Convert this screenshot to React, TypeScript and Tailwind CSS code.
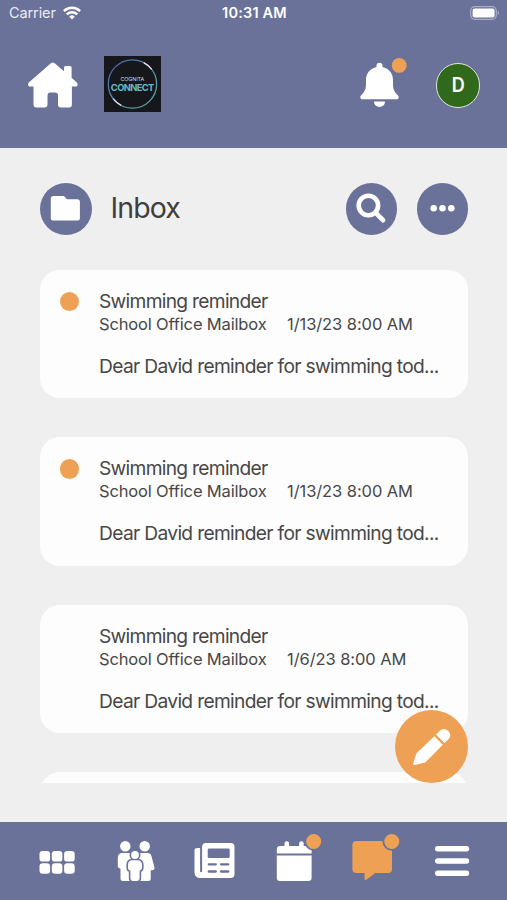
import React from 'react';

interface Message {
  id: number;
  subject: string;
  sender: string;
  date: string;
  preview: string;
  unread: boolean;
}

const messages: Message[] = [
  { id: 1, subject: 'Swimming reminder', sender: 'School Office Mailbox', date: '1/13/23 8:00 AM', preview: 'Dear David reminder for swimming tod...', unread: true },
  { id: 2, subject: 'Swimming reminder', sender: 'School Office Mailbox', date: '1/13/23 8:00 AM', preview: 'Dear David reminder for swimming tod...', unread: true },
  { id: 3, subject: 'Swimming reminder', sender: 'School Office Mailbox', date: '1/6/23 8:00 AM', preview: 'Dear David reminder for swimming tod...', unread: false },
];

const StatusBar: React.FC = () => (
  <div className="grid grid-cols-3 items-center h-[27px] pl-[9px] pr-[7px] text-white">
    <div className="flex items-center gap-[7px]">
      <span className="text-[14.5px] leading-none tracking-[-0.1px] text-[#e9ebf5]">Carrier</span>
      <svg className="-mt-px w-[18px] h-[14px]" viewBox="0 0 18 14" fill="none" stroke="#fff" strokeWidth="2.5">
        <path d="M.9 5.1a11.5 11.5 0 0 1 16.2 0" />
        <path d="M3.8 8.3a7.4 7.4 0 0 1 10.4 0" />
        <path d="M9 13.6 6.2 10.7a4 4 0 0 1 5.6 0Z" fill="#fff" stroke="none" />
      </svg>
    </div>
    <span className="text-center text-[14.5px] leading-none font-semibold tracking-[0.2px] whitespace-nowrap">10:31 AM</span>
    <svg className="-mt-px w-[30px] h-[14px] justify-self-end" viewBox="0 0 30 14">
      <rect x=".7" y=".7" width="25.6" height="12.6" rx="4" fill="none" stroke="#a9adc6" strokeWidth="1.2" />
      <rect x="2.6" y="2.4" width="22" height="9.2" rx="2" fill="#fff" />
      <path d="M27.7 4.8v4.4c1.8-.7 1.8-3.7 0-4.4Z" fill="#a9adc6" />
    </svg>
  </div>
);

const Header: React.FC = () => (
  <header className="h-[147.5px] shrink-0 bg-[#6b7299]">
    <StatusBar />
    <div className="flex items-start pt-[29px] pl-7 pr-[27px]">
      <svg className="mt-1.5 w-[50px] h-[46px]" viewBox="0 0 50 46" fill="#fff">
        <path d="M22.9 1.2a3 3 0 0 1 3.8 0l9.3 8V5.6a1.7 1.7 0 0 1 1.7-1.7h4.2a1.7 1.7 0 0 1 1.7 1.7v10.2l5.2 4.7c1.5 1.4 1 4-1.3 4h-3.6v18a3 3 0 0 1-3 3H33a3 3 0 0 1-3-3V33.5a3 3 0 0 0-3-3h-4.5a3 3 0 0 0-3 3v9a3 3 0 0 1-3 3H8.5a3 3 0 0 1-3-3v-18H2c-2.2 0-2.7-2.6-1.2-4Z" />
      </svg>
      <div className="relative ml-[26px] w-[56.5px] h-14 bg-[#15171b] flex flex-col items-center pt-[19.5px]">
        <svg className="absolute inset-0 w-full h-full" viewBox="0 0 56 56" fill="none" strokeWidth="1.3">
          <defs>
            <linearGradient id="ring" x1="0" y1="0" x2="1" y2="1">
              <stop offset="0" stopColor="#3c5fa8" />
              <stop offset=".5" stopColor="#5b8fb0" />
              <stop offset="1" stopColor="#5aa898" />
            </linearGradient>
          </defs>
          <circle cx="28.2" cy="28" r="24.2" stroke="url(#ring)" />
          <path d="M39.5 6.6a24.2 24.2 0 0 1 8 6.8M16.9 49.4a24.2 24.2 0 0 1-8-6.8" stroke="#dfe3ee" />
        </svg>
        <span className="text-[5.4px] leading-[6px] tracking-[-0.1px] text-[#d5d8da]">COGNITA</span>
        <span className="text-[9.4px] leading-[11px] font-bold tracking-[-0.65px] text-[#63bcc4]">CONNECT</span>
      </div>
      <svg className="ml-auto w-[50px] h-[52px]" viewBox="0 0 50 52">
        <path
          d="M22.5 6.7a3 3 0 0 1 3 3v1.3c6.4 1.3 10.5 6.3 10.5 12.8v4.2c0 5.4 1.5 8.3 5 11.4 1.4 1.4.6 3.9-1.5 3.9h-34c-2.1 0-2.9-2.5-1.5-3.9 3.5-3.1 5-6 5-11.4v-4.2c0-6.5 4.1-11.5 10.5-12.8v-1.3a3 3 0 0 1 3-3Z"
          fill="#fff"
        />
        <path d="M17 45.5h11c0 3.4-2.5 5.4-5.5 5.4S17 48.900 17 45.500Z" fill="#fff" />
        <circle cx="42.2" cy="9.4" r="7.4" fill="#eea154" />
      </svg>
      <div className="ml-[29px] mt-[7px] w-[44.5px] h-[44.5px] rounded-full border-[1.5px] border-[#dfe6dd] bg-[#30691b] flex items-center justify-center text-white text-[20px] leading-none font-semibold">
        <span className="scale-x-90">D</span>
      </div>
    </div>
  </header>
);

const RoundButton: React.FC<{ label: string; children: React.ReactNode }> = ({ label, children }) => (
  <button aria-label={label} className="w-[51.5px] h-[51.5px] rounded-full bg-[#6b7299]">
    <svg className="w-full h-full" viewBox="0 0 51.5 51.5">{children}</svg>
  </button>
);

const Toolbar: React.FC = () => (
  <div className="flex items-center h-[51.5px] w-[428px]">
    <RoundButton label="Folders">
      <path d="M13.5 13h9.3c1 0 1.5.4 2.1 1l2 2.2h10.3a2.7 2.7 0 0 1 2.7 2.7v16a2.7 2.7 0 0 1-2.7 2.7H13.5a2.7 2.7 0 0 1-2.7-2.7V15.7A2.7 2.7 0 0 1 13.5 13Z" fill="#fff" />
    </RoundButton>
    <h1 className="ml-[19px] -mt-0.5 text-[28.5px] leading-none tracking-[-0.9px] text-[#3f3f3f]">Inbox</h1>
    <div className="ml-auto flex gap-[19.5px]">
      <RoundButton label="Search">
        <circle cx="22.4" cy="22.5" r="9.7" fill="none" stroke="#fff" strokeWidth="4.6" />
        <path d="m30 30.1 7 7" stroke="#fff" strokeWidth="4.8" strokeLinecap="round" />
      </RoundButton>
      <RoundButton label="More">
        <g fill="#fff">
          <circle cx="16.7" cy="25.3" r="3.3" />
          <circle cx="25.5" cy="25.3" r="3.3" />
          <circle cx="34.3" cy="25.3" r="3.3" />
        </g>
      </RoundButton>
    </div>
  </div>
);

const MessageCard: React.FC<{ message: Message }> = ({ message }) => (
  <article className="flex h-[128.5px] shrink-0 rounded-[20px] bg-[#fdfdfd] text-[#474747]">
    <div className="w-[59px] shrink-0 pl-[19.5px] pt-[22px]">
      {message.unread && <div className="w-[19.5px] h-[19.5px] rounded-full bg-[#eea154]" />}
    </div>
    <div className="pt-[19px] whitespace-nowrap">
      <h2 className="text-[19.2px] leading-6 tracking-[-0.7px]">{message.subject}</h2>
      <div className="flex gap-[20.5px] text-[16.5px] leading-[22px]">
        <span className="tracking-[-0.16px]">{message.sender}</span>
        <span className="tracking-[-0.08px]">{message.date}</span>
      </div>
      <p className="mt-[19px] text-[19.2px] leading-6 tracking-[-0.67px]">{message.preview}</p>
    </div>
  </article>
);

const NavIcon: React.FC<{ label: string; children: React.ReactNode }> = ({ label, children }) => (
  <button aria-label={label} className="flex-1 flex justify-center">
    <svg className="w-14 h-14" viewBox="0 0 56 56" fill="#fff">{children}</svg>
  </button>
);

const childBody = 'M24.5 27.3h5c2.8 0 4.5 1.6 4.5 4.5v3c0 1.6-.9 2.6-2.4 2.6v8.2a2.4 2.4 0 0 1-2.4 2.4h-4.4a2.4 2.4 0 0 1-2.4-2.4v-8.2c-1.5 0-2.4-1-2.4-2.6v-3c0-2.9 1.700-4.500 4.500-4.500Z';

const BottomNav: React.FC = () => (
  <nav className="h-[78px] shrink-0 flex items-center pl-[18px] pr-[15.5px] bg-[#6b7299]">
    <NavIcon label="Apps">
      {[18, 30.2].map((y) => [10.5, 22.8, 35.1].map((x) => <rect key={`${x}-${y}`} x={x} y={y} width="10.6" height="10.6" rx="3.2" />))}
    </NavIcon>
    <NavIcon label="Family">
      <circle cx="17.3" cy="13.3" r="5.2" />
      <circle cx="36.7" cy="13.3" r="5.2" />
      <path d="M14.5 20h6c3.5 0 5 2 5 5v20.5a2.5 2.5 0 0 1-2.5 2.5h-8a2.5 2.5 0 0 1-2.5-2.5V35.5c-1.7 0-2.7-1-2.7-2.7v-8C9.8 21.800 11.500 20 14.500 20Z" />
      <path d="M33.5 20h6c2.2 0 3.5 1.2 4 3.2l2.9 11c.5 1.8-.6 3-2.5 3h-1.2v8.3a2.5 2.5 0 0 1-2.5 2.5H31a2.5 2.5 0 0 1-2.5-2.5V25c0-3 1.5-5 5-5Z" />
      <g fill="#6b7299" stroke="#6b7299" strokeWidth="3.2">
        <path d={childBody} />
        <circle cx="27" cy="22" r="3.9" />
      </g>
      <path d={childBody} />
      <circle cx="27" cy="22" r="3.9" />
    </NavIcon>
    <NavIcon label="News">
      <path
        fillRule="evenodd"
        d="M19 10h24.5a4 4 0 0 1 4 4v27a4 4 0 0 1-4 4H13a5.5 5.5 0 0 1-5.5-5.5V17.3c0-1.6 1.2-2.3 2.7-2.3h2.9v23.2a1 1 0 0 0 2 0V14a4 4 0 0 1 3.9-4Zm3.2 5.6c-1 0-1.5.6-1.5 1.5v6.5c0 1 .5 1.5 1.5 1.5h19c1 0 1.5-.6 1.5-1.5v-6.5c0-1-.5-1.5-1.5-1.5Z"
      />
      <path d="M21.8 31.3h7M34 31.3h7.3M21.8 38.5h7M34 38.5h7.3" stroke="#6b7299" strokeWidth="2.3" strokeLinecap="round" />
    </NavIcon>
    <NavIcon label="Calendar">
      <path d="M10.8 20.5V16.5a3.4 3.4 0 0 1 3.4-3.4h4.3v-2.6a2.3 2.3 0 0 1 4.6 0v2.6h10v-2.6a2.3 2.3 0 0 1 4.6 0v2.6h4.5a3.4 3.4 0 0 1 3.4 3.4v4Z" />
      <path d="M10.8 22.5h34.8v22.2a3.3 3.3 0 0 1-3.3 3.3H14.1a3.3 3.3 0 0 1-3.3-3.3Z" />
      <circle cx="47.7" cy="8.5" r="8.4" fill="#eea154" stroke="#6b7299" strokeWidth="1.8" />
    </NavIcon>
    <NavIcon label="Messages">
      <path d="M11.4 8h31.6a4 4 0 0 1 4 4v24a4 4 0 0 1-4 4H30.3l-8.6 6.600c-1.100.8-2.200.3-2.200-1V40h-8.100a4 4 0 0 1-4-4V12a4 4 0 0 1 4-4Z" fill="#eea154" />
      <circle cx="46.8" cy="8.5" r="8.4" fill="#eea154" stroke="#6b7299" strokeWidth="1.8" />
    </NavIcon>
    <NavIcon label="Menu">
      <path d="M13.7 15.8h28.8M13.7 28h28.8M13.7 40.2h28.8" stroke="#fff" strokeWidth="5.4" strokeLinecap="round" />
    </NavIcon>
  </nav>
);

const App: React.FC = () => {
  return (
    <div className="w-[507px] h-[900px] flex flex-col overflow-hidden bg-[#efefef] font-['Inter','Liberation_Sans',sans-serif]">
      <Header />
      <main className="flex-1 min-h-0 px-10 pt-[35.5px]">
        <Toolbar />
        <div className="relative mt-[35px] w-[428px] h-[513.5px]">
          <div className="h-full flex flex-col gap-[39px] overflow-hidden">
            {messages.map((message) => (
              <MessageCard key={message.id} message={message} />
            ))}
            <div className="h-[128.5px] shrink-0 rounded-[20px] bg-[#fdfdfd]" />
          </div>
          <button aria-label="Compose" className="absolute right-0 bottom-0 w-[73.5px] h-[73.5px] rounded-full bg-[#eea154]">
            <svg className="w-full h-full" viewBox="0 0 73.5 73.5" fill="#fff">
              <path d="m39.3 26.3 8.5 8.5-16.6 16.6a5 5 0 0 1-2.5 1.4l-8.7 2.1c-1.3.3-2-.4-1.7-1.7l2.5-8.2a5 5 0 0 1 1.3-2.2Z" />
              <path d="m41 24.6 4.1-4.1a5.3 5.3 0 0 1 7.5 0l1.1 1.1a5.3 5.3 0 0 1 0 7.5l-4.2 4Z" />
            </svg>
          </button>
        </div>
      </main>
      <BottomNav />
    </div>
  );
};

export default App;
